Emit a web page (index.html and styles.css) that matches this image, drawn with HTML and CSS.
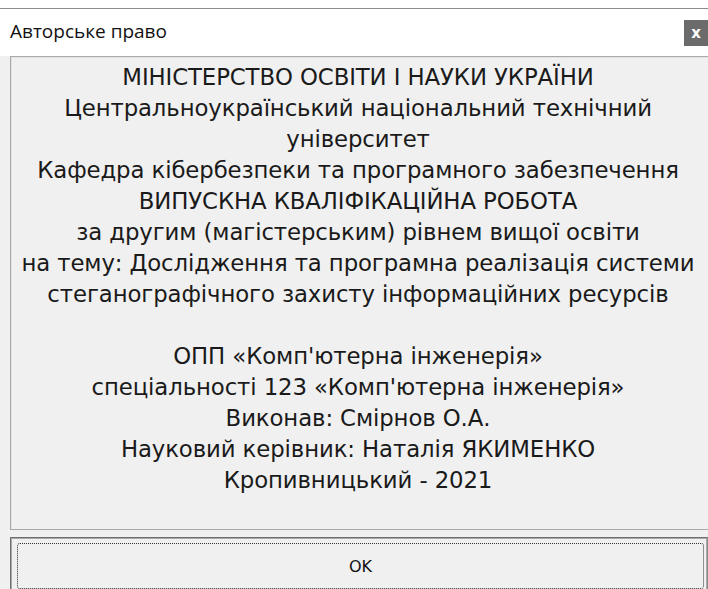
FILE: index.html
```html
<!DOCTYPE html>
<html lang="uk">
<head>
<meta charset="utf-8">
<title>Авторське право</title>
<link rel="stylesheet" href="styles.css">
</head>
<body>
<div class="window">
  <div class="titlebar">
    <span class="title">Авторське право</span>
    <span class="close">x</span>
  </div>
  <div class="client">
    <div class="memo">
      <div class="line">МІНІСТЕРСТВО ОСВІТИ І НАУКИ УКРАЇНИ</div>
      <div class="line">Центральноукраїнський національний технічний</div>
      <div class="line">університет</div>
      <div class="line">Кафедра кібербезпеки та програмного забезпечення</div>
      <div class="line">ВИПУСКНА КВАЛІФІКАЦІЙНА РОБОТА</div>
      <div class="line">за другим (магістерським) рівнем вищої освіти</div>
      <div class="line">на тему: Дослідження та програмна реалізація системи</div>
      <div class="line">стеганографічного захисту інформаційних ресурсів</div>
      <div class="line">&nbsp;</div>
      <div class="line">ОПП «Комп'ютерна інженерія»</div>
      <div class="line">спеціальності 123 «Комп'ютерна інженерія»</div>
      <div class="line">Виконав: Смірнов О.А.</div>
      <div class="line">Науковий керівник: Наталія ЯКИМЕНКО</div>
      <div class="line">Кропивницький - 2021</div>
    </div>
    <div class="ok-button">
      <div class="focus-rect">OK</div>
    </div>
  </div>
</div>
</body>
</html>
```
FILE: styles.css
```css
html, body {
  margin: 0;
  padding: 0;
  background: #ffffff;
}

body {
  width: 708px;
  height: 589px;
  overflow: hidden;
  font-family: "DejaVu Sans", sans-serif;
  color: #1a1a1a;
}

.window {
  margin-top: 8px;
  border-top: 1px solid #8c8c8c;
}

.titlebar {
  height: 47px;
  background: #ffffff;
  display: flex;
  align-items: center;
  justify-content: space-between;
  padding-left: 10px;
}

.title {
  font-family: "Open Sans", sans-serif;
  font-size: 19px;
  color: #111;
  margin-bottom: 4px;
}

.close {
  width: 24px;
  height: 26px;
  background: #6b6b6b;
  color: #ffffff;
  font-weight: bold;
  font-size: 15px;
  display: flex;
  align-items: center;
  justify-content: center;
  margin-top: 1px;
}

.client {
  background: #f0f0f0;
  padding-left: 10px;
  height: 540px;
}

.memo {
  border: 1px solid #a9a9a9;
  border-right: none;
  box-shadow: inset 1px 1px 0 #e3e3e3;
  padding-top: 5px;
  padding-right: 3px;
  box-sizing: border-box;
  height: 474px;
  font-size: 22.8px;
  line-height: 31px;
  letter-spacing: -0.1px;
  text-align: center;
}

.line {
  white-space: nowrap;
}

.ok-button {
  margin-top: 7px;
  height: 56px;
  border: 1px solid #6f6f6f;
  border-right-color: #8a8a8a;
  box-shadow: inset 0 0 0 1px #a8a8a8;
  padding: 5px 3px 0 6px;
  box-sizing: border-box;
}

.focus-rect {
  height: 44px;
  border: 1px dotted #303030;
  border-radius: 3px;
  display: flex;
  align-items: center;
  justify-content: center;
  font-size: 16px;
  color: #111;
}
```
